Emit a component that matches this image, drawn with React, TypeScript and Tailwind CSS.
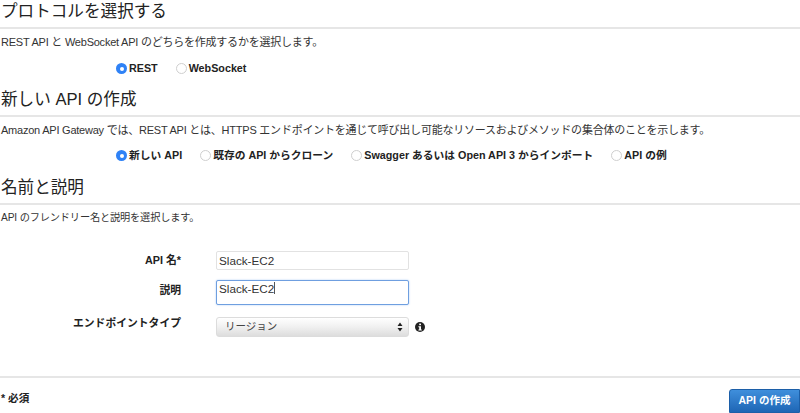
const jp = '[font-family:"Liberation_Sans","Noto_Sans_CJK_JP",sans-serif]';

function Radio({ label, checked }: { label: string; checked?: boolean }) {
  return (
    <div className="flex items-center gap-[2px]">
      {checked ? (
        <span className="flex h-[11px] w-[11px] items-center justify-center rounded-full bg-[#2f82f6]">
          <span className="h-[4px] w-[4px] rounded-full bg-white" />
        </span>
      ) : (
        <span className="h-[11px] w-[11px] rounded-full border border-[#cfcfcf] bg-white" />
      )}
      <span className="text-[10.75px] font-bold leading-none text-[#222]">{label}</span>
    </div>
  );
}

function Section({ title, desc, height, descClass, children }: { title: string; desc: string; height: string; descClass: string; children?: React.ReactNode }) {
  return (
    <section className={height}>
      <h2 className="flex h-[27px] items-center pb-[2px] pl-[1px] text-[16.6px] font-normal leading-none text-[#222]">{title}</h2>
      <div className="h-[2px] bg-[#e6e6e6]" />
      <p className={`mt-[7px] whitespace-nowrap pl-[1px] leading-[12px] text-[#333] ${descClass}`}>{desc}</p>
      {children}
    </section>
  );
}

function Label({ children }: { children: React.ReactNode }) {
  return <div className="w-[181px] text-right text-[10.8px] font-bold leading-none text-[#222]">{children}</div>;
}

export default function App() {
  return (
    <div className={`flex h-[413px] w-[800px] flex-col overflow-hidden bg-white ${jp}`}>
      <Section
        title="プロトコルを選択する"
        desc="REST API と WebSocket API のどちらを作成するかを選択します。"
        descClass="text-[11px] tracking-[-0.23px]"
        height="h-[88px]"
      >
        <div className="mt-[15px] flex gap-[18px] pl-[116px]">
          <Radio label="REST" checked />
          <Radio label="WebSocket" />
        </div>
      </Section>
      <Section
        title="新しい API の作成"
        desc="Amazon API Gateway では、REST API とは、HTTPS エンドポイントを通じて呼び出し可能なリソースおよびメソッドの集合体のことを示します。"
        descClass="text-[11px] tracking-[-0.23px]"
        height="h-[88px]"
      >
        <div className="mt-[14px] flex gap-[18px] pl-[116px]">
          <Radio label="新しい API" checked />
          <Radio label="既存の API からクローン" />
          <Radio label="Swagger あるいは Open API 3 からインポート" />
          <Radio label="API の例" />
        </div>
      </Section>
      <Section
        title="名前と説明"
        desc="API のフレンドリー名と説明を選択します。"
        descClass="text-[10.2px] tracking-[-0.15px]"
        height="h-[75px]"
      />

      <div className="flex flex-col gap-[10px]">
        <div className="flex items-center">
          <Label>API 名*</Label>
          <div className="ml-[35px] flex h-[19px] w-[193px] items-center rounded-[2px] border border-[#e2e2e2] bg-white pl-[2px] text-[11.7px] text-[#333]">
            Slack-EC2
          </div>
        </div>
        <div className="flex items-start">
          <div className="pt-[5px]">
            <Label>説明</Label>
          </div>
          <div className="ml-[35px] h-[25px] w-[193px] rounded-[2px] border border-[#6f9fe0] bg-white pl-[2px] pt-px text-[11.7px] leading-[13px] text-[#333] shadow-[0_0_2px_#a9c8f2]">
            Slack-EC2<span className="inline-block h-[12px] w-px bg-[#555] align-top" />
          </div>
        </div>
        <div className="mt-[2px] flex items-center">
          <div className="-mt-[8px]">
            <Label>エンドポイントタイプ</Label>
          </div>
          <div className="ml-[35px] flex h-[20px] w-[193px] items-center justify-between rounded-[3px] border border-[#dcdcdc] bg-gradient-to-b from-white via-[#f0f0f0] to-[#dddddd] pb-px pl-[8px] pr-[5px] text-[10.5px] text-[#444]">
            リージョン
            <svg width="6" height="10" viewBox="0 0 6 10" className="fill-[#222]">
              <path d="M3 0.5 L5.5 4 H0.5 Z M3 9.5 L0.5 6 H5.5 Z" />
            </svg>
          </div>
          <svg width="10" height="10" viewBox="0 0 10 10" className="ml-[6px]">
            <circle cx="5" cy="5" r="5" fill="#222" />
            <rect x="4.2" y="1.6" width="1.8" height="1.6" fill="#fff" />
            <path d="M3.4 4.2 H6 V7.4 H6.8 V8.4 H3.4 V7.4 H4.2 V5.2 H3.4 Z" fill="#fff" />
          </svg>
        </div>
      </div>

      <div className="mt-[39px] h-[2px] bg-[#e6e6e6]" />
      <div className="flex items-start justify-between">
        <span className="mt-[15px] pl-[1px] text-[10.6px] font-bold leading-none text-[#222]">* 必須</span>
        <button className="mt-[11px] flex h-[24px] w-[71px] items-center justify-center rounded-tl-[3px] border border-[#1c5fa8] bg-gradient-to-b from-[#3f8fdc] to-[#1e66b5] text-[10.5px] font-bold text-white">
          API の作成
        </button>
      </div>
    </div>
  );
}
